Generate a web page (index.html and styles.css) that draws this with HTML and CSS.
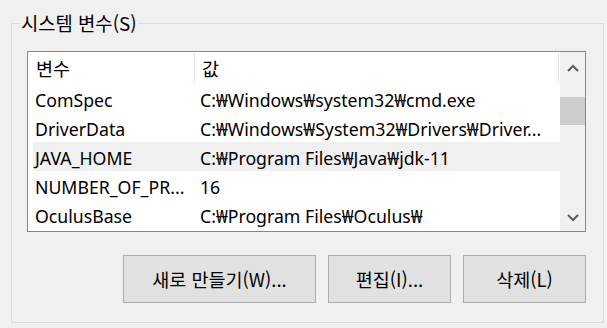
FILE: index.html
```html
<!DOCTYPE html>
<html lang="ko">
<head>
<meta charset="utf-8">
<title>시스템 변수</title>
<link rel="stylesheet" href="styles.css">
</head>
<body>
<fieldset class="group">
  <legend class="group-title">시스템 변수(S)</legend>
  <div class="listbox">
    <div class="list">
      <div class="row header">
        <div class="cell name">변수</div>
        <div class="cell value">값</div>
      </div>
      <div class="row"><div class="cell name">ComSpec</div><div class="cell value">C:₩Windows₩system32₩cmd.exe</div></div>
      <div class="row"><div class="cell name">DriverData</div><div class="cell value">C:₩Windows₩System32₩Drivers₩Driver...</div></div>
      <div class="row selected"><div class="cell name">JAVA_HOME</div><div class="cell value">C:₩Program Files₩Java₩jdk-11</div></div>
      <div class="row"><div class="cell name">NUMBER_OF_PR...</div><div class="cell value">16</div></div>
      <div class="row"><div class="cell name">OculusBase</div><div class="cell value">C:₩Program Files₩Oculus₩</div></div>
    </div>
    <div class="scrollbar">
      <div class="arrow up">
        <svg width="12" height="8" viewBox="0 0 12 8"><path d="M1 7 L6 2 L11 7" fill="none" stroke="#606060" stroke-width="2.2"/></svg>
      </div>
      <div class="track"><div class="thumb"></div></div>
      <div class="arrow down">
        <svg width="12" height="8" viewBox="0 0 12 8"><path d="M1 1 L6 6 L11 1" fill="none" stroke="#606060" stroke-width="2.2"/></svg>
      </div>
    </div>
  </div>
  <div class="buttons">
    <button class="btn wide">새로 만들기(W)...</button>
    <button class="btn">편집(I)...</button>
    <button class="btn">삭제(L)</button>
  </div>
</fieldset>
</body>
</html>
```

FILE: styles.css
```css
html, body {
  margin: 0;
  padding: 0;
  background: #f0f0f0;
}

body {
  font-family: "Noto Sans", "Noto Sans CJK KR", sans-serif;
  font-size: 17.7px;
  color: #000;
  width: 607px;
  height: 328px;
  overflow: hidden;
}

.group {
  box-sizing: border-box;
  width: 593px;
  margin: 12px 0 0 11px;
  padding: 17px 17px 19px 15px;
  border: 1px solid #dcdcdc;
  min-width: 0;
}

.group-title {
  margin-left: -7px;
  padding: 0 1px;
  font-family: "Noto Sans CJK KR", sans-serif;
  font-size: 18.8px;
  line-height: 22px;
}

.listbox {
  box-sizing: border-box;
  width: 559px;
  height: 181px;
  border: 1px solid #828790;
  background: #fff;
  display: flex;
}

.list {
  flex: 1;
  padding-left: 5px;
  overflow: hidden;
}

.row {
  display: flex;
  height: 29px;
  align-items: center;
  white-space: nowrap;
}

.row .cell {
  padding-top: 2px;
}

.row.header {
  height: 32px;
}

.row.selected {
  background: #f0f0f0;
}

.cell.name {
  width: 167px;
  padding-left: 2px;
  box-sizing: border-box;
  overflow: hidden;
}

.cell.value {
  flex: 1;
  overflow: hidden;
}

.header .cell {
  font-family: "Noto Sans CJK KR", sans-serif;
  font-size: 18.5px;
  align-self: stretch;
  display: flex;
  align-items: center;
  padding-top: 0;
}

.header .cell.name {
  padding-left: 3px;
  border-right: 1px solid #e5e5e5;
  margin: 1px 0 1px 0;
  width: 162px;
}

.header .cell.value {
  padding-left: 7px;
  margin: 1px 0;
  border-right: 1px solid #e5e5e5;
  margin-right: 1px;
}

.scrollbar {
  width: 25px;
  background: #f0f0f0;
  display: flex;
  flex-direction: column;
}

.arrow {
  display: flex;
  align-items: center;
  justify-content: center;
  flex: none;
}

.arrow svg {
  display: block;
}

.arrow.up {
  height: 31px;
}

.arrow.down {
  height: 27px;
  padding-top: 4px;
}

.track {
  flex: 1;
  padding-top: 14px;
}

.thumb {
  height: 28px;
  background: #cdcdcd;
}

.buttons {
  display: flex;
  gap: 12px;
  justify-content: flex-end;
  margin-top: 23px;
}

.btn {
  box-sizing: border-box;
  width: 123px;
  height: 48px;
  background: #e1e1e1;
  border: 1px solid #adadad;
  font-family: "Noto Sans CJK KR", sans-serif;
  font-size: 18.5px;
  color: #000;
  padding: 0;
}

.btn.wide {
  width: 193px;
}
```
